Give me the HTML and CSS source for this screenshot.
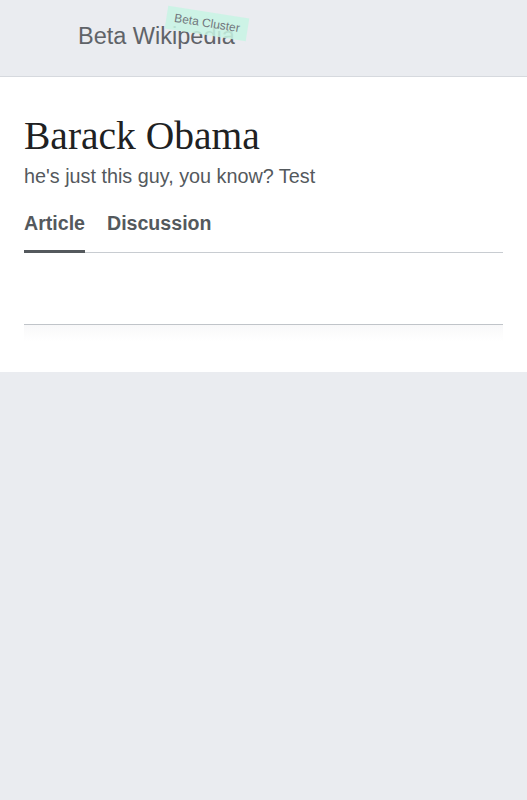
FILE: index.html
```html
<!DOCTYPE html>
<html lang="en">
<head>
  <meta charset="UTF-8">
  <meta name="viewport" content="width=device-width, initial-scale=1.0">
  <title>Barack Obama - Beta Wikipedia</title>
  <link rel="stylesheet" href="styles.css">
</head>
<body>

  <!-- Header -->
  <header class="header">
    <div class="branding">
      <span class="wordmark">Beta Wikipedia</span>
      <span class="cluster-badge">Beta Cluster</span>
    </div>
  </header>

  <!-- Page content -->
  <main class="content">
    <h1 class="page-title">Barack Obama</h1>
    <p class="page-desc">he's just this guy, you know? Test</p>

    <ul class="tabs">
      <li class="tab active">Article</li>
      <li class="tab">Discussion</li>
    </ul>

    <div class="page-body"></div>
    <div class="page-end"></div>
  </main>

</body>
</html>
```

FILE: styles.css
```css
/* General Styling */
* {
  margin: 0;
  padding: 0;
  box-sizing: border-box;
}

body {
  background-color: #eaecf0;
  font-family: "Liberation Sans", Arial, sans-serif;
  color: #54595d;
}

/* Header */
.header {
  height: 77px;
  border-bottom: 1px solid #d6d9de;
  padding-left: 78px;
  padding-bottom: 4px;
  display: flex;
  align-items: center;
}

.branding {
  position: relative;
}

.wordmark {
  font-size: 23.5px;
  color: #5f6368;
}

.cluster-badge {
  position: absolute;
  left: 88px;
  top: -11px;
  padding: 4px 8px 5px;
  font-size: 12px;
  color: #72777d;
  background-color: rgba(200, 245, 228, 0.85);
  transform: rotate(9deg);
  white-space: nowrap;
}

/* Content */
.content {
  background-color: #fff;
  padding: 0 24px;
  height: 295px;
}

.page-title {
  font-family: "Liberation Serif", "Times New Roman", serif;
  font-weight: normal;
  font-size: 39.5px;
  color: #202122;
  padding-top: 36px;
  line-height: 46px;
}

.page-desc {
  font-size: 19.8px;
  margin-top: 4px;
  line-height: 26px;
}

.tabs {
  list-style: none;
  display: flex;
  gap: 22px;
  margin-top: 14px;
  border-bottom: 1px solid #c8ccd1;
}

.tab {
  font-size: 19.6px;
  font-weight: bold;
  padding: 9px 0 16px;
  line-height: 22px;
  margin-bottom: -1px;
  border-bottom: 3px solid transparent;
}

.tab.active {
  border-bottom-color: #54595d;
}

.page-body {
  height: 72px;
  border-bottom: 1px solid #c0c4c9;
}

.page-end {
  height: 16px;
  background: linear-gradient(#f8f8f9, #fff);
}
```
